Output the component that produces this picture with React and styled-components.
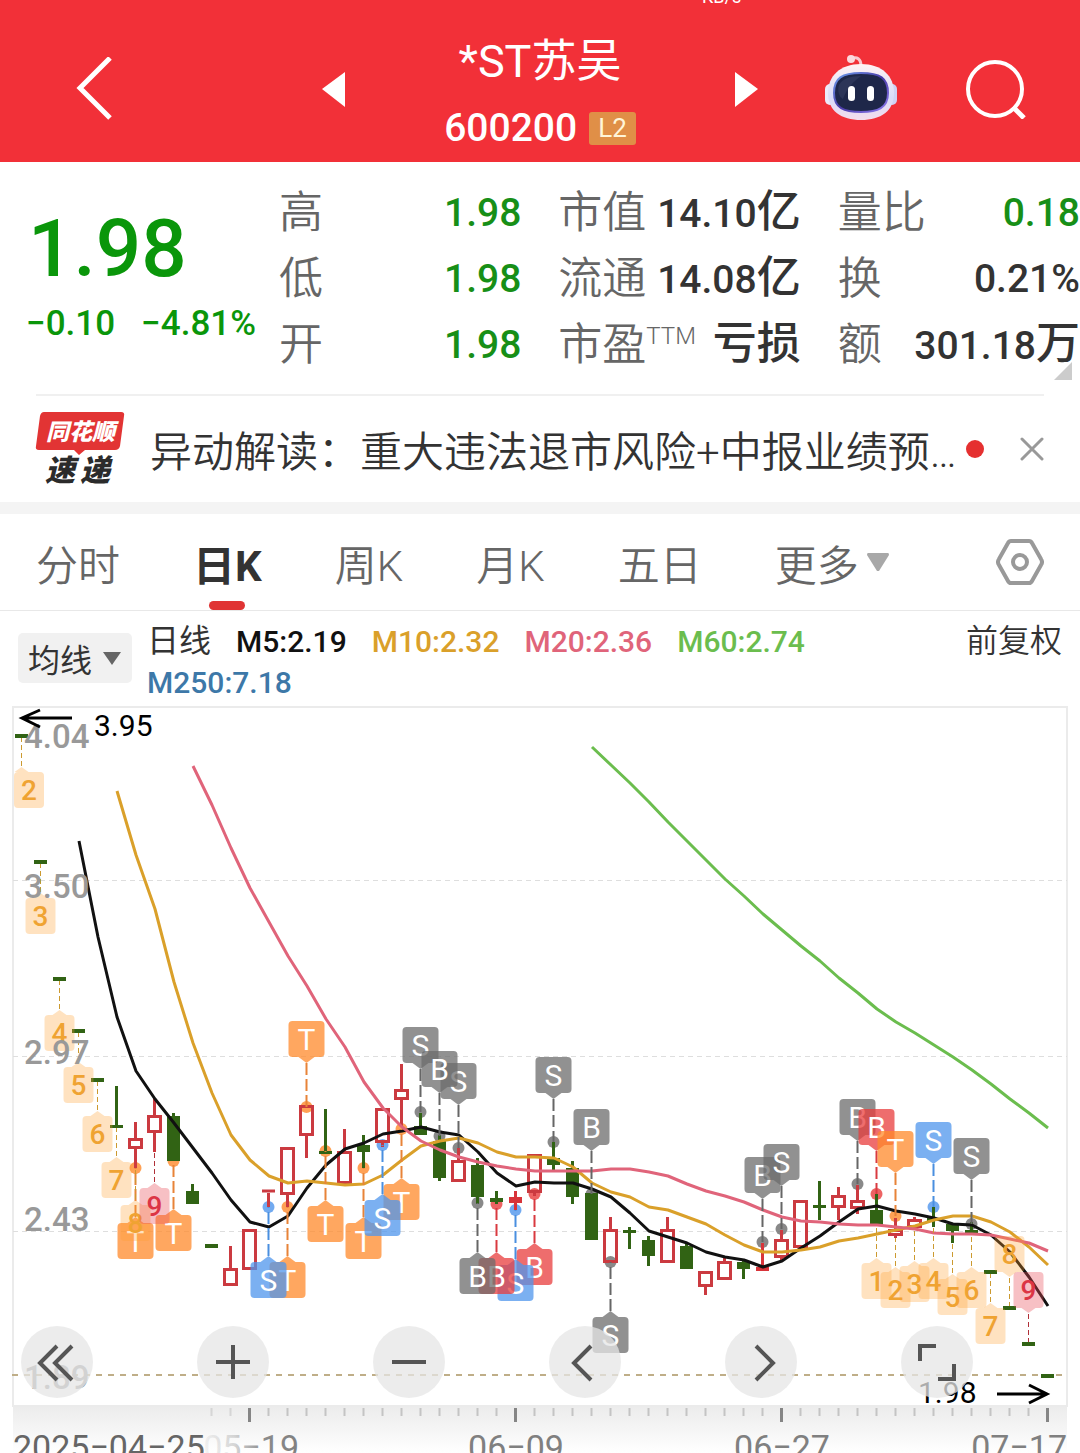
import React from 'react'
import styled, { createGlobalStyle } from 'styled-components'

const MA5 = [[79, 841], [98, 937], [117, 1017], [136, 1071], [155, 1099], [174, 1123], [193, 1148], [212, 1173], [231, 1200], [250, 1222], [269, 1227], [288, 1216], [307, 1188], [326, 1165], [345, 1149], [364, 1143], [383, 1134], [402, 1131], [421, 1127], [440, 1132], [459, 1135], [478, 1152], [497, 1173], [516, 1186], [535, 1182], [554, 1183], [573, 1183], [592, 1189], [611, 1197], [630, 1213], [649, 1231], [668, 1237], [687, 1243], [706, 1252], [725, 1257], [744, 1260], [763, 1267], [782, 1261], [801, 1248], [820, 1236], [839, 1222], [858, 1209], [877, 1206], [896, 1211], [915, 1214], [934, 1218], [953, 1224], [972, 1225], [991, 1235], [1010, 1252], [1029, 1277], [1048, 1306]]
const MA10 = [[117, 791], [136, 855], [155, 909], [174, 982], [193, 1043], [212, 1093], [231, 1135], [250, 1160], [269, 1176], [288, 1183], [307, 1181], [326, 1183], [345, 1185], [364, 1184], [383, 1175], [402, 1160], [421, 1146], [440, 1141], [459, 1138], [478, 1143], [497, 1152], [516, 1157], [535, 1157], [554, 1158], [573, 1167], [592, 1183], [611, 1192], [630, 1197], [649, 1207], [668, 1210], [687, 1217], [706, 1224], [725, 1235], [744, 1245], [763, 1252], [782, 1252], [801, 1250], [820, 1247], [839, 1241], [858, 1238], [877, 1234], [896, 1230], [915, 1226], [934, 1220], [953, 1216], [972, 1216], [991, 1222], [1010, 1232], [1029, 1247], [1048, 1265]]
const MA20 = [[193, 766], [212, 805], [231, 848], [250, 888], [269, 922], [288, 956], [307, 986], [326, 1019], [345, 1047], [364, 1082], [383, 1108], [402, 1127], [421, 1141], [440, 1150], [459, 1157], [478, 1162], [497, 1166], [516, 1169], [535, 1171], [554, 1171], [573, 1171], [592, 1171], [611, 1169], [630, 1169], [649, 1172], [668, 1176], [687, 1184], [706, 1191], [725, 1196], [744, 1202], [763, 1210], [782, 1217], [801, 1221], [820, 1222], [839, 1224], [858, 1225], [877, 1225], [896, 1227], [915, 1229], [934, 1233], [953, 1234], [972, 1234], [991, 1235], [1010, 1239], [1029, 1243], [1048, 1251]]
const MA60 = [[592, 747], [611, 765], [630, 783], [649, 802], [668, 822], [687, 841], [706, 860], [725, 879], [744, 896], [763, 914], [782, 930], [801, 946], [820, 961], [839, 978], [858, 993], [877, 1009], [896, 1022], [915, 1033], [934, 1045], [953, 1057], [972, 1070], [991, 1084], [1010, 1099], [1029, 1113], [1048, 1128]]

// one entry per day: colour, high, body top, body bottom, low
const candles = [
  ['g', 734, 734, 738, 738],
  ['g', 860, 860, 864, 864],
  ['g', 977, 977, 981, 981],
  ['g', 1029, 1029, 1033, 1033],
  ['g', 1078, 1078, 1082, 1082],
  ['g', 1086, 1125, 1128, 1128],
  ['r', 1122, 1138, 1149, 1168],
  ['r', 1098, 1115, 1133, 1152],
  ['g', 1113, 1116, 1161, 1161],
  ['g', 1184, 1191, 1204, 1204],
  ['g', 1244, 1244, 1248, 1248],
  ['r', 1246, 1268, 1286, 1286],
  ['r', 1229, 1229, 1270, 1270],
  ['r', 1190, 1190, 1193, 1207],
  ['r', 1147, 1147, 1195, 1207],
  ['r', 1105, 1105, 1136, 1158],
  ['g', 1109, 1151, 1154, 1154],
  ['r', 1129, 1151, 1184, 1184],
  ['g', 1135, 1145, 1152, 1168],
  ['r', 1108, 1108, 1143, 1147],
  ['r', 1064, 1089, 1100, 1127],
  ['g', 1113, 1126, 1135, 1135],
  ['g', 1135, 1141, 1178, 1181],
  ['r', 1148, 1160, 1182, 1182],
  ['g', 1158, 1165, 1197, 1204],
  ['g', 1191, 1198, 1202, 1204],
  ['f', 1191, 1197, 1203, 1210],
  ['r', 1154, 1154, 1193, 1196],
  ['g', 1142, 1158, 1165, 1170],
  ['g', 1161, 1168, 1197, 1204],
  ['g', 1193, 1193, 1240, 1240],
  ['r', 1217, 1229, 1263, 1263],
  ['g', 1227, 1230, 1233, 1249],
  ['g', 1236, 1240, 1256, 1266],
  ['r', 1217, 1229, 1263, 1263],
  ['g', 1243, 1246, 1269, 1269],
  ['r', 1271, 1271, 1287, 1295],
  ['r', 1258, 1261, 1280, 1280],
  ['g', 1259, 1262, 1269, 1279],
  ['f', 1243, 1267, 1271, 1271],
  ['r', 1230, 1239, 1258, 1260],
  ['r', 1200, 1200, 1248, 1248],
  ['g', 1181, 1205, 1208, 1220],
  ['r', 1187, 1195, 1208, 1220],
  ['r', 1185, 1200, 1209, 1214],
  ['g', 1194, 1210, 1225, 1225],
  ['r', 1218, 1229, 1236, 1238],
  ['r', 1217, 1219, 1228, 1230],
  ['g', 1207, 1218, 1221, 1227],
  ['g', 1223, 1224, 1231, 1243],
  ['g', 1222, 1230, 1234, 1234],
  ['g', 1270, 1270, 1274, 1274],
  ['g', 1306, 1306, 1310, 1310],
  ['g', 1342, 1342, 1346, 1346],
  ['g', 1374, 1374, 1378, 1378],
]

// day index, letter, colour, tag centre, dot
const signals = [
  [6, 'T', 'orange', 1241, 1168],
  [8, 'T', 'orange', 1233, 1161],
  [14, 'T', 'orange', 1280, 1207],
  [13, 'S', 'blue', 1280, 1207],
  [15, 'T', 'orange', 1039, 1107],
  [16, 'T', 'orange', 1224, 1151],
  [18, 'T', 'orange', 1241, 1168],
  [20, 'T', 'orange', 1202, 1129],
  [19, 'S', 'blue', 1218, 1145],
  [21, 'S', 'grey', 1045, 1112],
  [23, 'S', 'grey', 1081, 1148],
  [22, 'B', 'grey', 1069, 1136],
  [27, 'B', 'red', 1267, 1194],
  [26, 'S', 'blue', 1283, 1210],
  [25, 'B', 'red', 1276, 1204],
  [24, 'B', 'grey', 1276, 1203],
  [28, 'S', 'grey', 1075, 1142],
  [30, 'B', 'grey', 1127, 1194],
  [31, 'S', 'grey', 1335, 1262],
  [39, 'B', 'grey', 1175, 1242],
  [40, 'S', 'grey', 1162, 1229],
  [44, 'B', 'grey', 1117, 1184],
  [45, 'B', 'red', 1127, 1194],
  [46, 'T', 'orange', 1149, 1216],
  [48, 'S', 'blue', 1140, 1207],
  [50, 'S', 'grey', 1156, 1224],
]

// day index, digit, tag centre, line start
const counts = [
  [0, 2, 790, 738],
  [1, 3, 916, 864],
  [2, 4, 1033, 981],
  [3, 5, 1085, 1033],
  [4, 6, 1134, 1082],
  [5, 7, 1180, 1128],
  [6, 8, 1223, 1168],
  [7, 9, 1206, 1152],
  [45, 1, 1281, 1225],
  [46, 2, 1290, 1238],
  [47, 3, 1284, 1230],
  [48, 4, 1281, 1227],
  [49, 5, 1297, 1243],
  [50, 6, 1290, 1234],
  [51, 7, 1326, 1274],
  [52, 8, 1254, 1306],
  [53, 9, 1290, 1342],
]

const scale = [['4.04', 748], ['3.50', 898], ['2.97', 1064], ['2.43', 1231], ['1.89', 1389]]

const tones = { orange: '#ff8a2b', blue: '#4f95ec', grey: '#6c6c6c', red: '#e83c3c' }
const lineTones = { orange: '#e88338', blue: '#4a8fe0', grey: '#666666', red: '#d93a40' }

const dayX = (i) => 21.5 + i * 19
const toPoints = (list) => list.map((p) => p.join(',')).join(' ')

function Candle({ x, data }) {
  const [kind, high, top, bottom, low] = data
  if (kind === 'r') {
    return (
      <g stroke="#cb3a40" strokeWidth="3" fill="none">
        {high < top && <line x1={x} x2={x} y1={high} y2={top} />}
        {low > bottom && <line x1={x} x2={x} y1={bottom} y2={low} />}
        {bottom - top < 5
          ? <line x1={x - 6.5} x2={x + 6.5} y1={top + 1} y2={top + 1} />
          : <rect x={x - 6} y={top + 1.5} width="12" height={bottom - top - 3} />}
      </g>
    )
  }
  const color = kind === 'f' ? '#d8343a' : '#316314'
  return (
    <g fill={color}>
      <rect x={x - 1.5} y={high} width="3" height={low - high} />
      <rect x={x - 6.5} y={top} width="13" height={bottom - top} />
    </g>
  )
}

function SignalTag({ data }) {
  const [i, letter, tone, y, dot] = data
  const x = dayX(i)
  const dir = y < dot ? 1 : -1
  const edge = y + dir * 18
  return (
    <g>
      <line x1={x} x2={x} y1={edge + dir * 6} y2={dot} stroke={lineTones[tone]} strokeWidth="2" strokeDasharray="12 4" />
      <rect x={x - 18} y={y - 18} width="36" height="36" rx="4" fill={tones[tone]} fillOpacity="0.75" />
      <path d={`M${x - 8} ${edge}L${x} ${edge + dir * 6}L${x + 8} ${edge}Z`} fill={tones[tone]} fillOpacity="0.75" />
      <text x={x} y={y + 11} fontSize="30" textAnchor="middle" fill="#fff">{letter}</text>
    </g>
  )
}

function CountTag({ data }) {
  const [i, digit, y, start] = data
  const x = dayX(i)
  // the first tag is pushed inside the frame
  const boxX = Math.max(x, 29)
  const dir = y < start ? 1 : -1
  const edge = y + dir * 18
  const last = digit === 9
  const fill = last ? '#e8505c' : '#ff9f30'
  return (
    <g>
      <line x1={x} x2={x} y1={edge + dir * 6} y2={start} stroke={last ? '#b03038' : '#cc9a30'} strokeWidth="1" strokeDasharray="5 3" />
      <g fill={fill} fillOpacity={last ? 0.36 : 0.3}>
        <rect x={boxX - 15} y={y - 18} width="30" height="36" rx="4" />
        <path d={`M${x - 7} ${edge}L${x} ${edge + dir * 5}L${x + 7} ${edge}Z`} />
      </g>
      <text x={boxX} y={y + 10} fontSize="28" fontWeight="500" textAnchor="middle" fill={last ? '#dc3545' : '#efa332'}>{digit}</text>
    </g>
  )
}

function Chart() {
  const ticks = []
  for (let i = 10; i < 55; i++) ticks.push(i)
  return (
    <ChartSvg viewBox="0 706 1080 747" role="img" aria-label="日K">
      <defs>
        <linearGradient id="axisShade" x1="0" y1="0" x2="0" y2="1">
          <stop offset="0" stopColor="#ececec" />
          <stop offset="1" stopColor="#ffffff" />
        </linearGradient>
        <linearGradient id="axisFade" gradientUnits="userSpaceOnUse" x1="206" y1="0" x2="300" y2="0">
          <stop offset="0" stopColor="#808080" stopOpacity="0.1" />
          <stop offset="0.3" stopColor="#808080" stopOpacity="0.3" />
          <stop offset="0.6" stopColor="#808080" stopOpacity="0.9" />
          <stop offset="1" stopColor="#808080" />
        </linearGradient>
      </defs>

      <rect x="13" y="1407" width="1054" height="46" fill="url(#axisShade)" />
      <rect x="13" y="707" width="1054" height="699" fill="#fff" stroke="#ebebeb" strokeWidth="2" />
      <g stroke="#dedede" strokeWidth="1" strokeDasharray="5 4">
        <line x1="13" x2="1067" y1="880.5" y2="880.5" />
        <line x1="13" x2="1067" y1="1056.5" y2="1056.5" />
        <line x1="13" x2="1067" y1="1231.5" y2="1231.5" />
      </g>
      <line x1="12" x2="1064" y1="1375" y2="1375" stroke="#bfae88" strokeWidth="2" strokeDasharray="6 6" />

      {signals.map((s) => (
        <circle key={s[0]} cx={dayX(s[0])} cy={s[4]} r="6" fill={tones[s[2]]} fillOpacity="0.8" />
      ))}
      {candles.map((c, i) => <Candle key={i} x={dayX(i)} data={c} />)}

      <g fill="none" strokeWidth="3" strokeLinejoin="round">
        <polyline points={toPoints(MA5)} stroke="#111111" />
        <polyline points={toPoints(MA10)} stroke="#daa02a" />
        <polyline points={toPoints(MA20)} stroke="#e0647a" />
        <polyline points={toPoints(MA60)} stroke="#6bbd4e" />
      </g>

      {signals.map((s) => <SignalTag key={s[0]} data={s} />)}
      {counts.map((c) => <CountTag key={c[0]} data={c} />)}

      {scale.map(([label, y]) => (
        <text key={label} x="24" y={y} fontSize="33" fontWeight="500" fill="#999999">{label}</text>
      ))}

      <g fill="none" stroke="#000" strokeWidth="3">
        <path d="M72 718H22M40 710L22 718L40 727" />
        <path d="M997 1394H1047M1029 1385L1047 1394L1029 1403" />
      </g>
      <text x="94" y="736" fontSize="30" fill="#000">3.95</text>
      <text x="918" y="1403" fontSize="30" fill="#000">1.98</text>

      {ticks.map((i) => {
        const major = (i - 12) % 14 === 0
        return (
          <rect
            key={i}
            x={dayX(i) + (major ? -1.5 : -1)}
            y="1408"
            width={major ? 3 : 2}
            height={major ? 14 : 8}
            fill={major ? '#858585' : '#c4c4c4'}
            fillOpacity={i < 12 ? 0.6 : 1}
          />
        )
      })}
      <g fontSize="34" fill="#808080">
        <text x="13" y="1459" fill="#666666">2025−04−25</text>
        <text x="299" y="1459" textAnchor="end" fill="url(#axisFade)">05−19</text>
        <text x="516" y="1459" textAnchor="middle">06−09</text>
        <text x="782" y="1459" textAnchor="middle">06−27</text>
        <text x="1067" y="1459" textAnchor="end">07−17</text>
      </g>
    </ChartSvg>
  )
}

function Robot() {
  return (
    <svg width="72" height="68" viewBox="0 0 72 68">
      <defs>
        <linearGradient id="shell" x1="0" y1="0" x2="0" y2="1">
          <stop offset="0" stopColor="#fff3f4" />
          <stop offset="0.6" stopColor="#d9dcf8" />
          <stop offset="1" stopColor="#f4dcec" />
        </linearGradient>
        <linearGradient id="visorEdge" x1="0" y1="0" x2="1" y2="1">
          <stop offset="0" stopColor="#6ea0ee" />
          <stop offset="0.5" stopColor="#4a3ba8" />
          <stop offset="1" stopColor="#8f7cf0" />
        </linearGradient>
      </defs>
      <path d="M26 4C32 1 36 4 36 11" fill="none" stroke="#f9c9cf" strokeWidth="3" />
      <circle cx="26" cy="4" r="4" fill="#fbd9dd" />
      <rect x="0" y="29" width="10" height="21" rx="5" fill="#eceafa" />
      <rect x="62" y="29" width="10" height="21" rx="5" fill="#cfd2f4" />
      <path d="M36 9C57 9 69 21 69 38C69 56 56 65 36 65C16 65 3 56 3 38C3 21 15 9 36 9Z" fill="url(#shell)" />
      <path d="M36 18C55 18 63 23 63 38C63 53 53 57 36 57C19 57 9 53 9 38C9 23 17 18 36 18Z" fill="#1e2749" stroke="url(#visorEdge)" strokeWidth="2" />
      <path d="M14 30C17 24 25 21 36 21C29 26 22 33 18 44C14 42 12 35 14 30Z" fill="#3a4468" fillOpacity="0.5" />
      <rect x="23" y="31" width="7" height="15" rx="3.5" fill="#fff" />
      <rect x="42" y="31" width="7" height="15" rx="3.5" fill="#fff" />
    </svg>
  )
}

function ExpressLogo() {
  return (
    <Logo width="88" height="74" viewBox="0 0 88 74">
      <path d="M8 0H85Q89 0 88 4L84 34Q83 38 79 38H49L43 43L38 38H3Q-1 38 0 34L4 4Q5 0 8 0Z" fill="#e23434" />
      <text x="10" y="28" fontSize="23" fontWeight="900" fontStyle="italic" fill="#fff">同花顺</text>
      <text y="69" fontSize="30" fontWeight="900" fontStyle="italic" fill="#2b2b2b">
        <tspan x="9">速</tspan>
        <tspan x="44">递</tspan>
      </text>
    </Logo>
  )
}

function Stat({ label, note, value, unit, tone }) {
  return (
    <StatRow>
      <dt>{label}{note && <sup>{note}</sup>}</dt>
      <StatValue $tone={tone}>{value}{unit && <Unit>{unit}</Unit>}</StatValue>
    </StatRow>
  )
}

function App() {
  return (
    <Page>
      <GlobalStyle />
      <Header>
        <Status>KB/s</Status>
        <NavBar>
          <NavSide>
            <IconButton aria-label="返回">
              <svg width="36" height="64" viewBox="0 0 36 64" fill="none" stroke="#fff" strokeWidth="5">
                <path d="M34 1L4 31L34 61" />
              </svg>
            </IconButton>
          </NavSide>
          <Switcher>
            <IconButton aria-label="上一只">
              <svg width="24" height="36" viewBox="0 0 24 36"><path d="M23 1V36L0 18Z" fill="#fff" /></svg>
            </IconButton>
            <Title>
              <h1>*ST苏吴</h1>
              <Code>600200<Level>L2</Level></Code>
            </Title>
            <IconButton aria-label="下一只">
              <svg width="24" height="36" viewBox="0 0 24 36"><path d="M1 1V36L24 18Z" fill="#fff" /></svg>
            </IconButton>
          </Switcher>
          <NavSide $end>
            <IconButton aria-label="助手"><Robot /></IconButton>
            <IconButton aria-label="搜索">
              <svg width="60" height="60" viewBox="0 0 60 60" fill="none" stroke="#fff" strokeWidth="4">
                <circle cx="29" cy="30" r="27" />
                <path d="M47 48L58 59" strokeWidth="5" />
              </svg>
            </IconButton>
          </NavSide>
        </NavBar>
      </Header>

      <Quote>
        <Price>
          <strong>1.98</strong>
          <Change><span>−0.10</span><span>−4.81%</span></Change>
        </Price>
        <Stats>
          <Stat label="高" value="1.98" tone="down" />
          <Stat label="低" value="1.98" tone="down" />
          <Stat label="开" value="1.98" tone="down" />
        </Stats>
        <Stats>
          <Stat label="市值" value="14.10" unit="亿" />
          <Stat label="流通" value="14.08" unit="亿" />
          <Stat label="市盈" note="TTM" unit="亏损" />
        </Stats>
        <Stats>
          <Stat label="量比" value="0.18" tone="down" />
          <Stat label="换" value="0.21%" />
          <Stat label="额" value="301.18" unit="万" />
        </Stats>
        <Corner />
      </Quote>

      <News>
        <ExpressLogo />
        <NewsLink href="#news">异动解读：重大违法退市风险+中报业绩预…</NewsLink>
        <Dot />
        <IconButton aria-label="关闭">
          <svg width="24" height="24" viewBox="0 0 24 24" stroke="#999" strokeWidth="3" strokeLinecap="round">
            <path d="M2 2L22 22M22 2L2 22" />
          </svg>
        </IconButton>
      </News>

      <Tabs>
        <Tab>分时</Tab>
        <Tab $active>日K</Tab>
        <Tab>周K</Tab>
        <Tab>月K</Tab>
        <Tab>五日</Tab>
        <Tab>
          更多
          <svg width="22" height="18" viewBox="0 0 22 18"><path d="M1 0H21Q22 0 22 2L12 18H10L0 2Q0 0 1 0Z" fill="#a8a8a8" /></svg>
        </Tab>
        <Settings aria-label="设置">
          <svg width="48" height="46" viewBox="0 0 48 46" fill="none" stroke="#999" strokeWidth="4" strokeLinejoin="round">
            <path d="M15 2H33Q35 2 36 4L45 20Q47 23 45 26L36 42Q35 44 33 44H15Q13 44 12 42L3 26Q1 23 3 20L12 4Q13 2 15 2Z" />
            <circle cx="24" cy="23" r="7" />
          </svg>
        </Settings>
      </Tabs>

      <Legend>
        <Indicator>
          均线
          <svg width="18" height="13" viewBox="0 0 18 13"><path d="M0 0H18L9 13Z" fill="#666" /></svg>
        </Indicator>
        <Averages>
          <Period>日线</Period>
          <Average $color="#111111">M5:2.19</Average>
          <Average $color="#daa02a">M10:2.32</Average>
          <Average $color="#e0647a">M20:2.36</Average>
          <Average $color="#6bbd4e">M60:2.74</Average>
          <Average $color="#3d78a8">M250:7.18</Average>
        </Averages>
        <Adjust>前复权</Adjust>
      </Legend>

      <ChartArea>
        <Chart />
        <Controls>
          <RoundButton aria-label="最左"><svg viewBox="0 0 72 72"><path d="M36 20L19 37L36 54M51 20L34 37L51 54" /></svg></RoundButton>
          <RoundButton aria-label="放大"><svg viewBox="0 0 72 72"><path d="M36 19V53M19 36H53" /></svg></RoundButton>
          <RoundButton aria-label="缩小"><svg viewBox="0 0 72 72"><path d="M19 36H53" /></svg></RoundButton>
          <RoundButton aria-label="左移"><svg viewBox="0 0 72 72"><path d="M42 20L25 37L42 54" /></svg></RoundButton>
          <RoundButton aria-label="右移"><svg viewBox="0 0 72 72"><path d="M31 20L48 37L31 54" /></svg></RoundButton>
          <RoundButton aria-label="全屏"><svg viewBox="0 0 72 72"><path d="M35 20H19V35M37 53H53V38" /></svg></RoundButton>
        </Controls>
      </ChartArea>
    </Page>
  )
}

export default App

const GlobalStyle = createGlobalStyle`
  * {
    box-sizing: border-box;
  }
  body {
    margin: 0;
    background: #fff;
    font-family: Roboto, "Noto Sans CJK SC", sans-serif;
    color: #333;
  }
  button {
    padding: 0;
    border: 0;
    background: none;
    font: inherit;
    color: inherit;
  }
  h1, dl, dd {
    margin: 0;
  }
`

const Page = styled.div`
  width: 100%;
  overflow: hidden;
`

const Header = styled.header`
  background: #f23038;
  color: #fff;
`

const Status = styled.div`
  height: 4px;
  overflow: hidden;
  display: flex;
  align-items: flex-end;
  padding-left: 65%;
  font-size: 18px;
  line-height: 14px;
`

const NavBar = styled.nav`
  display: grid;
  grid-template-columns: 1fr 436px 1fr;
  align-items: center;
  height: 158px;
  padding-top: 12px;
`

const NavSide = styled.div`
  display: flex;
  align-items: center;
  justify-content: ${(p) => (p.$end ? 'flex-end' : 'flex-start')};
  gap: 69px;
  padding: ${(p) => (p.$end ? '0 54px 0 0' : '0 0 0 76px')};
`

const IconButton = styled.button`
  display: flex;
  flex: none;
`

const Switcher = styled.div`
  display: flex;
  align-items: center;
  justify-content: space-between;
`

const Title = styled.div`
  margin-top: 12px;
  text-align: center;
  h1 {
    font-size: 45px;
    font-weight: 400;
    line-height: 66px;
  }
`

const Code = styled.div`
  display: flex;
  align-items: center;
  gap: 12px;
  font-size: 39px;
  font-weight: 500;
  line-height: 66px;
`

const Level = styled.span`
  padding: 0 9px;
  border-radius: 3px;
  background: #e08f47;
  color: #fff5d8;
  font-size: 26px;
  font-weight: 400;
  line-height: 33px;
`

const Quote = styled.section`
  position: relative;
  display: grid;
  grid-template-columns: 242px 1fr 1fr 1fr;
  column-gap: 37px;
  height: 232px;
  padding-top: 18px;
`

const Price = styled.div`
  padding: 20px 0 0 28px;
  color: #0a960a;
  white-space: nowrap;
  strong {
    display: block;
    font-size: 80px;
    font-weight: 500;
    line-height: 98px;
  }
`

const Change = styled.div`
  display: flex;
  gap: 26px;
  margin-left: -2px;
  font-size: 35px;
  font-weight: 500;
  line-height: 52px;
`

const Stats = styled.dl`
  min-width: 0;
`

const StatRow = styled.div`
  display: flex;
  align-items: center;
  justify-content: space-between;
  height: 66px;
  white-space: nowrap;
  dt {
    display: flex;
    color: #666;
    font-size: 44px;
    font-weight: 350;
    line-height: 66px;
  }
  sup {
    font-size: 24px;
    line-height: 48px;
  }
`

const StatValue = styled.dd`
  font-size: 39px;
  font-weight: 500;
  line-height: 66px;
  color: ${(p) => (p.$tone === 'down' ? '#178f17' : '#333')};
`

const Unit = styled.span`
  font-size: 44px;
`

const Corner = styled.i`
  position: absolute;
  right: 8px;
  bottom: 14px;
  border-left: 18px solid transparent;
  border-bottom: 18px solid #ccc;
`

const News = styled.section`
  display: flex;
  align-items: center;
  height: 108px;
  margin: 0 36px;
  border-top: 2px solid #f0f0f0;
`

const Logo = styled.svg`
  flex: none;
  overflow: visible;
`

const NewsLink = styled.a`
  flex: 1;
  min-width: 0;
  margin-left: 26px;
  padding-top: 8px;
  overflow: hidden;
  color: #333;
  font-size: 42px;
  font-weight: 350;
  line-height: 60px;
  text-decoration: none;
  white-space: nowrap;
`

const Dot = styled.i`
  flex: none;
  width: 18px;
  height: 18px;
  margin: 0 36px 0 4px;
  border-radius: 50%;
  background: #e53030;
`

const Tabs = styled.nav`
  display: flex;
  gap: 73px;
  height: 109px;
  padding: 0 36px;
  border-top: 12px solid #f4f4f4;
  border-bottom: 1px solid #e8e8e8;
`

const Tab = styled.button`
  position: relative;
  display: flex;
  align-items: center;
  gap: 8px;
  color: ${(p) => (p.$active ? '#333' : '#666')};
  font-size: 42px;
  font-weight: ${(p) => (p.$active ? 700 : 350)};
  white-space: nowrap;
  &::after {
    content: "";
    display: ${(p) => (p.$active ? 'block' : 'none')};
    position: absolute;
    bottom: 0;
    left: 50%;
    width: 36px;
    height: 9px;
    margin-left: -18px;
    border-radius: 5px;
    background: #e03434;
  }
`

const Settings = styled.button`
  display: flex;
  align-items: center;
  margin-left: auto;
`

const Legend = styled.section`
  display: flex;
  align-items: flex-start;
  height: 95px;
  padding: 10px 18px 0;
`

const Indicator = styled.button`
  display: flex;
  align-items: center;
  justify-content: space-between;
  width: 114px;
  height: 50px;
  margin-top: 12px;
  padding: 0 11px 0 10px;
  border-radius: 5px;
  background: #f1f1f1;
  font-size: 32px;
`

const Averages = styled.div`
  flex: 1;
  display: flex;
  flex-wrap: wrap;
  column-gap: 25px;
  margin: 0 60px 0 15px;
  line-height: 41px;
`

const Period = styled.span`
  font-size: 32px;
`

const Average = styled.span`
  color: ${(p) => p.$color};
  font-size: 30px;
  font-weight: 500;
`

const Adjust = styled.span`
  font-size: 32px;
  font-weight: 350;
  line-height: 41px;
`

const ChartArea = styled.section`
  position: relative;
`

const ChartSvg = styled.svg`
  display: block;
  width: 100%;
`

const Controls = styled.div`
  position: absolute;
  right: 107px;
  bottom: 55px;
  left: 21px;
  display: flex;
  justify-content: space-between;
`

const RoundButton = styled.button`
  width: 72px;
  height: 72px;
  border-radius: 50%;
  background: rgba(230, 230, 230, 0.75);
  svg {
    display: block;
    fill: none;
    stroke: #555;
    stroke-width: 4;
  }
`
